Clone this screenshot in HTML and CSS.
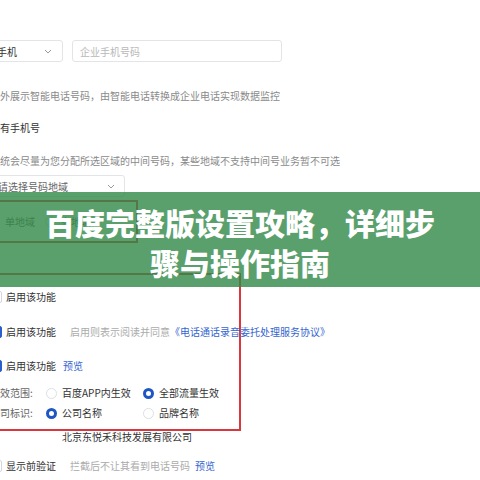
FILE: index.html
```html
<!DOCTYPE html>
<html lang="zh-CN">
<head>
<meta charset="utf-8">
<title>百度完整版设置攻略</title>
<link rel="stylesheet" href="styles.css">
</head>
<body>
<div class="page">
  <div class="phone-row">
    <div class="select sel-type"><span>手机</span><svg class="chev" width="8" height="5" viewBox="0 0 8 5"><polyline points="1,1 4,4 7,1" fill="none" stroke="#9a9a9a" stroke-width="1"/></svg></div>
    <div class="input"><span>企业手机号码</span></div>
  </div>
  <p class="hint h1">对外展示智能电话号码，由智能电话转换成企业电话实现数据监控</p>
  <p class="label l1">已有手机号</p>
  <p class="hint h2">系统会尽量为您分配所选区域的中间号码，某些地域不支持中间号业务暂不可选</p>
  <div class="select sel-area"><span>请选择号码地域</span><svg class="chev" width="8" height="5" viewBox="0 0 8 5"><polyline points="1,1 4,4 7,1" fill="none" stroke="#9a9a9a" stroke-width="1"/></svg></div>
  <div class="mark region-box">
    <span>单地域</span><i class="radio"></i><span>多地域</span>
  </div>
  <div class="mark feature-box">
    <div class="check-row"><i class="cb"></i><span>启用该功能</span></div>
    <div class="check-row r2"><i class="cb on"></i><span>启用该功能</span><span class="muted m-agree">启用则表示阅读并同意</span><span class="link">《电话通话录音委托处理服务协议》</span></div>
    <div class="check-row r3"><i class="cb on"></i><span>启用该功能</span><span class="link m-pre">预览</span></div>
    <div class="radio-grid">
      <span class="rlabel">生效范围:</span>
      <span class="opt"><i class="radio"></i>百度APP内生效</span>
      <span class="opt"><i class="radio on"></i>全部流量生效</span>
      <span class="rlabel">公司标识:</span>
      <span class="opt"><i class="radio on"></i>公司名称</span>
      <span class="opt"><i class="radio"></i>品牌名称</span>
    </div>
  </div>
  <p class="company">北京东悦禾科技发展有限公司</p>
  <div class="check-row last"><i class="cb"></i><span>显示前验证</span><span class="muted m-agree">拦截后不让其看到电话号码</span><span class="link m-pre2">预览</span></div>
</div>
<div class="banner"><h1>百度完整版设置攻略，详细步骤与操作指南</h1></div>
</body>
</html>
```

FILE: styles.css
```css
html, body {
  margin: 0;
  padding: 0;
}
body {
  width: 480px;
  height: 480px;
  overflow: hidden;
  position: relative;
  background: #fff;
  font-family: "Noto Sans CJK SC", "Microsoft YaHei", sans-serif;
  font-size: 10px;
  color: #333;
}
p { margin: 0; line-height: 14px; white-space: nowrap; }

.page {
  margin-left: -10px;
  padding-top: 40px;
  display: flex;
  flex-direction: column;
  align-items: flex-start;
}

.phone-row { display: flex; gap: 9px; }

.select {
  height: 22px;
  box-sizing: border-box;
  border: 1px solid #e2e4e8;
  border-radius: 3px;
  display: flex;
  align-items: center;
  justify-content: space-between;
  white-space: nowrap;
  background: #fff;
}
.sel-type {
  width: 93px;
  margin-left: -20px;
  padding: 0 10px 0 26px;
  color: #333;
}
.input {
  width: 210px;
  height: 22px;
  box-sizing: border-box;
  border: 1px solid #e2e4e8;
  border-radius: 3px;
  padding-left: 7px;
  display: flex;
  align-items: center;
  color: #b8b8b8;
}
.hint { color: #8a8a8a; }
.h1 { margin-top: 27px; }
.l1 { margin-top: 18px; color: #333; }
.h2 { margin-top: 19px; }

.sel-area {
  margin-top: 7px;
  width: 155px;
  margin-left: -20px;
  padding: 0 9px 0 27px;
  color: #666;
}

.mark {
  border: 2px solid #d9363e;
  margin-left: -20px;
  box-sizing: border-box;
}
.region-box {
  margin-top: 3px;
  width: 168px;
  height: 43px;
  display: flex;
  align-items: center;
  padding-left: 33px;
  color: #666;
  white-space: nowrap;
}
.region-box .radio { margin: 0 5px 0 10px; }

.feature-box {
  margin-top: 30px;
  width: 271px;
  height: 158px;
  padding: 15px 0 0 18px;
  display: flex;
  flex-direction: column;
  align-items: flex-start;
}

.check-row {
  display: flex;
  align-items: center;
  height: 14px;
  line-height: 14px;
  white-space: nowrap;
}
.r2 { margin-top: 21px; }
.r3 { margin-top: 20px; }

.cb {
  width: 12px;
  height: 12px;
  box-sizing: border-box;
  border: 1px solid #d3d6dc;
  border-radius: 2px;
  margin-right: 4px;
  background: #fff;
  flex: none;
}
.cb.on { background: #2b5fcf; border-color: #2b5fcf; }

.muted { color: #ababab; }
.link { color: #3566cf; }
.m-agree { margin-left: 14px; }
.m-pre { margin-left: 7px; }
.m-pre2 { margin-left: 5px; }

.radio-grid {
  margin-top: 13px;
  display: grid;
  grid-template-columns: 56px 97px auto;
  row-gap: 6px;
  line-height: 14px;
  white-space: nowrap;
}
.rlabel { color: #666; }
.opt { display: flex; align-items: center; color: #333; }

.radio {
  width: 11px;
  height: 11px;
  box-sizing: border-box;
  border: 1px solid #dcdfe4;
  border-radius: 50%;
  margin-right: 5px;
  background: #fff;
  flex: none;
  display: inline-block;
}
.radio.on {
  border: 3.5px solid #1e56c4;
  background: #fff;
}

.company {
  margin-top: -1px;
  margin-left: 72px;
  color: #333;
}
.last { margin-top: 15px; }

.banner {
  position: absolute;
  left: 0;
  top: 192px;
  width: 480px;
  height: 95px;
  box-sizing: border-box;
  padding: 4px 40px 0;
  background: rgba(49, 136, 71, 0.8);
  display: flex;
  align-items: center;
  justify-content: center;
}
.banner h1 {
  margin: 0;
  font-size: 30px;
  line-height: 40px;
  font-weight: 900;
  color: #fff;
  text-align: center;
}
```
